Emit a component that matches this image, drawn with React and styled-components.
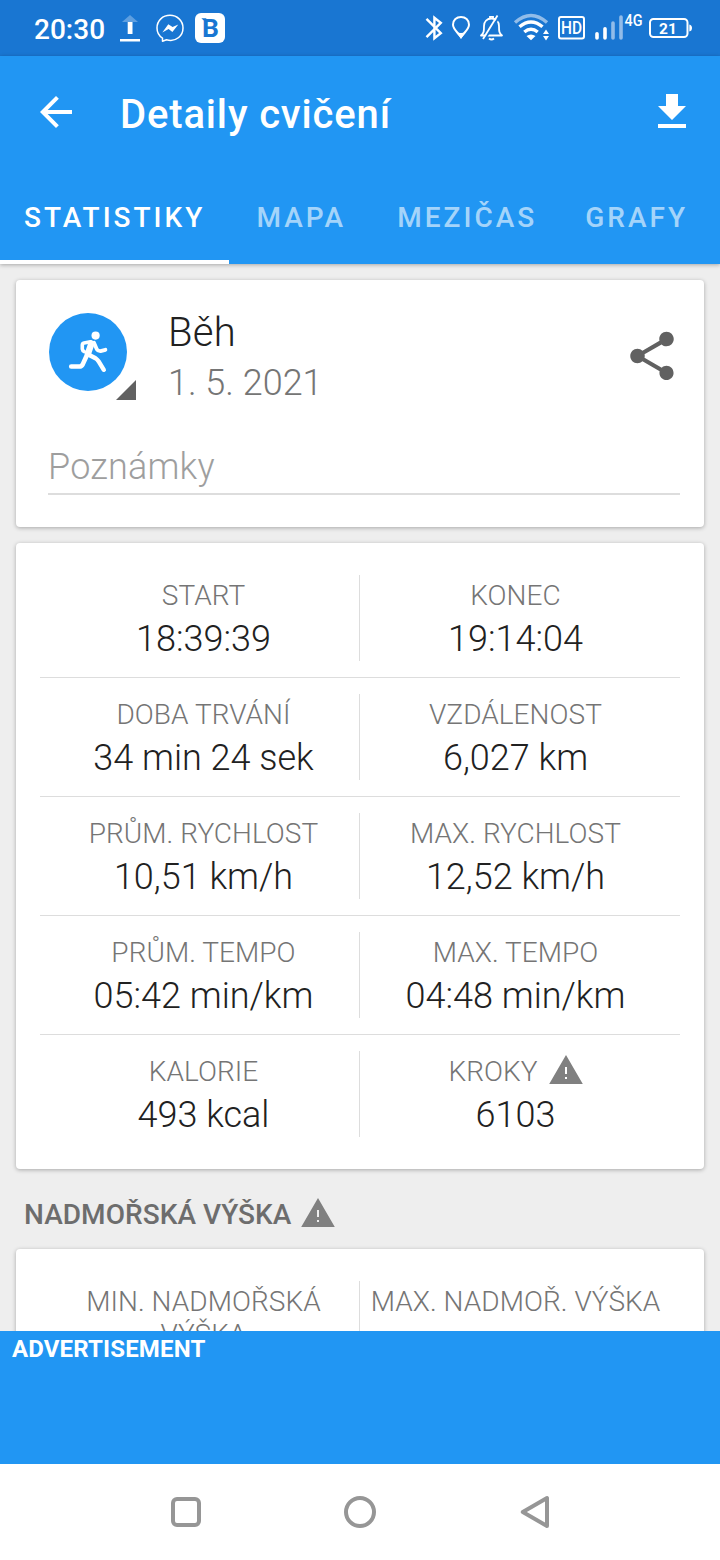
import React from 'react'
import styled, { createGlobalStyle } from 'styled-components'

const GlobalStyle = createGlobalStyle`
    * {
        box-sizing: border-box;
    }
    body {
        margin: 0;
        background-color: #eeeeee;
        font-family: Roboto, "Noto Sans", sans-serif;
    }
    svg {
        display: block;
        flex-shrink: 0;
    }
`

const Screen = styled.div`
    width: 720px;
    height: 1560px;
    display: flex;
    flex-direction: column;
    overflow: hidden;
`

// status bar
const StatusBar = styled.div`
    height: 56px;
    flex-shrink: 0;
    padding: 0 28px 0 34px;
    background-color: #1976d2;
    color: white;
    display: flex;
    justify-content: space-between;
`
const StatusGroup = styled.div`
    display: flex;
    align-items: center;
`
const Clock = styled.span`
    width: 82px;
    font-size: 28px;
    font-weight: 500;
    line-height: 32px;
    padding-top: 3px;
`

// app bar
const Header = styled.header`
    height: 208px;
    flex-shrink: 0;
    background-color: #2196f3;
    color: white;
    position: relative;
    box-shadow: 0 1px 4px rgba(0, 0, 0, 0.3);
`
const Toolbar = styled.div`
    height: 112px;
    padding: 0 24px 0 32px;
    display: flex;
    align-items: center;
`
const Title = styled.h1`
    flex: 1;
    margin: 0;
    padding: 5px 0 0 40px;
    font-size: 40px;
    font-weight: 500;
    letter-spacing: 0.85px;
`
const Tabs = styled.nav`
    height: 96px;
    display: flex;
`
const Tab = styled.a`
    min-width: 144px;
    padding: 2px 24px 0;
    display: flex;
    align-items: center;
    justify-content: center;
    font-size: 28px;
    font-weight: 500;
    letter-spacing: 3px;
    border-top: 4px solid transparent;
    border-bottom: 4px solid ${props => props.$active ? 'white' : 'transparent'};
    color: ${props => props.$active ? 'white' : 'rgba(255, 255, 255, 0.6)'};
`

const Content = styled.main`
    flex: 1;
    min-height: 0;
    overflow: hidden;
    padding: 16px 16px 0;
`
const Card = styled.section`
    background-color: white;
    border-radius: 4px;
    box-shadow: 0 1px 4px rgba(0, 0, 0, 0.3);
    margin-bottom: 16px;
`

// activity
const ActivityCard = styled(Card)`
    height: 247px;
    padding: 32px 24px 32px 32px;
    display: flex;
    flex-direction: column;
    justify-content: space-between;
`
const Activity = styled.div`
    display: flex;
    height: 88px;
`
const Avatar = styled.div`
    width: 88px;
    height: 88px;
    position: relative;
`
const Corner = styled.div`
    position: absolute;
    right: 0;
    bottom: 0;
    width: 20px;
    height: 20px;
    background-color: #616161;
    clip-path: polygon(100% 0, 100% 100%, 0 100%);
`
const ActivityInfo = styled.div`
    flex: 1;
    padding-left: 32px;
`
const ActivityName = styled.div`
    margin-top: -3px;
    font-size: 40px;
    line-height: 47px;
    font-weight: 300;
    letter-spacing: 0.3px;
    color: #212121;
`
const ActivityDate = styled.div`
    margin-top: 6px;
    font-size: 36px;
    line-height: 42px;
    font-weight: 300;
    color: #757575;
`
const ShareButton = styled.div`
    height: 88px;
    padding-top: 15px;
    margin-right: -1px;
`
const Notes = styled.div`
    height: 52px;
    border-bottom: 2px solid #dddddd;
    font-size: 36px;
    line-height: 48px;
    font-weight: 300;
    letter-spacing: 0.2px;
    color: #9e9e9e;
`

// stats
const StatsCard = styled(Card)`
    padding: 16px 24px;
`
const StatRow = styled.div`
    display: flex;
    padding: 16px 8px;
    & + & {
        border-top: 1px solid #dddddd;
    }
`
const Stat = styled.div`
    width: 312px;
    min-height: 86px;
    padding-top: 4px;
    display: flex;
    flex-direction: column;
    align-items: center;
    text-align: center;
    border-right: 1px solid ${props => props.$first ? '#dddddd' : 'transparent'};
`
const StatLabel = styled.div`
    display: flex;
    align-items: center;
    gap: 11px;
    font-size: 28px;
    line-height: 33px;
    font-weight: 300;
    letter-spacing: 0.05px;
    color: #757575;
    svg {
        margin: -4px 0 0;
    }
`
const StatValue = styled.div`
    padding-top: 5px;
    font-size: 36px;
    line-height: 44px;
    font-weight: 300;
    color: #212121;
`
const SectionTitle = styled.h2`
    height: 80px;
    margin: -16px 0 0;
    padding: 7px 8px 0;
    display: flex;
    align-items: center;
    gap: 10px;
    font-size: 28px;
    font-weight: 500;
    letter-spacing: 0.05px;
    color: #6d6d6d;
`
const SectionText = styled.span`
    padding-top: 3px;
`

const Advertisement = styled.div`
    height: 133px;
    flex-shrink: 0;
    padding: 4px 12px;
    background-color: #2196f3;
    color: white;
    font-size: 24px;
    line-height: 28px;
    font-weight: 700;
    letter-spacing: 0.15px;
`
const NavBar = styled.div`
    height: 96px;
    flex-shrink: 0;
    background-color: white;
    display: flex;
    align-items: center;
    justify-content: center;
    gap: 138px;
`

const WarningIcon = () => (
    <svg width="34" height="29" viewBox="0 0 34 29">
        <path fill="#808080" fillRule="evenodd" d="M17 0L33.8 29H0.2zM16 12v7h2v-7zM16 22v2h2v-2z" />
    </svg>
)

const RunnerIcon = () => (
    <svg width="88" height="88" viewBox="48 312 88 88">
        <circle cx="88" cy="352" r="39" fill="#2196f3" />
        <circle cx="95.6" cy="335.6" r="4.1" fill="white" />
        <g fill="none" stroke="white" strokeLinecap="round" strokeLinejoin="round">
            <path strokeWidth="3.6" d="M90.5 341.8L84 343Q82.3 343.4 82.3 345V349Q82.5 350.8 84.3 351.6" />
            <path strokeWidth="3.8" d="M94 342.8L96.8 349.2Q98 351.2 100.5 351.1L105.4 349.8" />
            <path strokeWidth="6.4" d="M91.4 343.6L88 353.5" />
            <path strokeWidth="4.6" d="M87.2 354.5L82.6 364.6Q81.6 366.5 79.5 366.5H71.2" />
            <path strokeWidth="4.4" d="M88.2 354.5L95.5 358.3Q97.4 359.6 98.5 361.2L103.8 369.8" />
        </g>
    </svg>
)

const stats = [
    [{ label: 'START', value: '18:39:39' }, { label: 'KONEC', value: '19:14:04' }],
    [{ label: 'DOBA TRVÁNÍ', value: '34 min 24 sek' }, { label: 'VZDÁLENOST', value: '6,027 km' }],
    [{ label: 'PRŮM. RYCHLOST', value: '10,51 km/h' }, { label: 'MAX. RYCHLOST', value: '12,52 km/h' }],
    [{ label: 'PRŮM. TEMPO', value: '05:42 min/km' }, { label: 'MAX. TEMPO', value: '04:48 min/km' }],
    [{ label: 'KALORIE', value: '493 kcal' }, { label: 'KROKY', value: '6103', warning: true }],
]
const altitude = [
    [{ label: 'MIN. NADMOŘSKÁ VÝŠKA' }, { label: 'MAX. NADMOŘ. VÝŠKA' }],
]
const tabs = ['STATISTIKY', 'MAPA', 'MEZIČAS', 'GRAFY']

function Stats({ rows }) {
    return (
        <StatsCard>
            {rows.map((row, i) => (
                <StatRow key={i}>
                    {row.map((item, j) => (
                        <Stat key={item.label} $first={j === 0}>
                            <StatLabel>{item.label}{item.warning && <WarningIcon />}</StatLabel>
                            {item.value && <StatValue>{item.value}</StatValue>}
                        </Stat>
                    ))}
                </StatRow>
            ))}
        </StatsCard>
    )
}

function PhoneStatus() {
    return (
        <StatusBar>
            <StatusGroup>
                <Clock>20:30</Clock>
                <svg width="110" height="56" viewBox="116 0 110 56">
                    <path d="M130 15l8 7h-16z" fill="#5e9fe0" />
                    <path d="M127.7 22h4.8v12h-4.8zM120 39h20v2.5h-20z" fill="white" />
                    <path d="M162.5 38.2V41.2L166.5 39.8C177 42.5 183 35 183 28C183 20.5 177 15.3 170 15.3C162.8 15.3 157 20.5 157 28C157 32.5 159.2 36 162.5 38.2Z" fill="none" stroke="white" strokeWidth="1.5" strokeLinejoin="round" />
                    <path d="M162.3 32.5L168.3 24.2L172.6 27L178.3 24.4L172.4 32L168.6 29Z" fill="white" />
                    <rect x="195" y="13" width="30" height="30" rx="6" fill="white" />
                    <path d="M201.3 18.2h5v2.4h-2.5z" fill="#1976d2" />
                    <text x="202" y="37.3" fontFamily="Roboto" fontSize="26.5" fontWeight="700" fill="#1976d2">B</text>
                </svg>
            </StatusGroup>
            <svg width="270" height="56" viewBox="422 0 270 56" fill="none" stroke="white">
                {/* bluetooth */}
                <path strokeWidth="2.4" d="M426.5 18.8L440.8 33.2L434.4 38.2V17.8L440.8 22.8L426.5 37.2" />
                {/* location */}
                <path strokeWidth="2" d="M461 37C458.5 33 453 29.5 453 24.8C453 20 456.6 17 461 17C465.4 17 469 20 469 24.8C469 29.5 463.5 33 461 37Z" />
                <path stroke="none" fill="white" d="M455.8 32Q461 34 466.2 32L461 38.8z" />
                {/* muted bell */}
                <path strokeWidth="1.8" strokeLinejoin="round" d="M481 35.5C484 33 484 31 484 26C484 21.5 487 18.5 491.5 18.5C496 18.5 499 21.5 499 26C499 31 499 33 502 35.5Z" />
                <path strokeWidth="1.8" d="M490 18.5V16.8h3v1.7M489 38.5Q491.5 40.5 494 38.5" />
                <path stroke="#1976d2" strokeWidth="2" d="M485 39L499 17" />
                <path strokeWidth="1.8" d="M483 39L497.5 15.5" />
                {/* wifi */}
                <path stroke="#91bce9" strokeWidth="3.4" d="M515 22.5Q531 8.5 547 22.5" />
                <path strokeWidth="3.4" d="M519.5 26.8Q531 17 542.5 26.8M524.3 32Q531 26.4 537.7 32" />
                <path stroke="none" fill="white" d="M526.5 36Q531 33 535.5 36L531 40.3zM546 29.5l3 4.5h-6zM546 40.5l3-4.5h-6z" />
                {/* hd */}
                <rect x="559" y="17" width="25" height="21.5" rx="2" strokeWidth="2" />
                <text x="561" y="34" fontFamily="Roboto" fontSize="17.5" fontWeight="500" fill="white" stroke="none" textLength="21" lengthAdjust="spacingAndGlyphs">HD</text>
                {/* signal */}
                <path strokeWidth="3.6" strokeLinecap="round" d="M597 33.8V38M605 28.8V38" />
                <path stroke="#91bce9" strokeWidth="3.6" strokeLinecap="round" d="M613 23V38M621 17V38" />
                <text x="624.5" y="26" fontFamily="Roboto" fontSize="17" fontWeight="500" fill="white" stroke="none" textLength="18" lengthAdjust="spacingAndGlyphs">4G</text>
                {/* battery */}
                <rect x="650" y="19" width="37.5" height="18" rx="3.5" strokeWidth="2" />
                <path stroke="none" fill="white" d="M689.3 24.5Q692 25 692 28Q692 31 689.3 31.5z" />
                <text x="659" y="33.8" fontFamily="Roboto" fontSize="15.5" fontWeight="700" fill="white" stroke="none">21</text>
            </svg>
        </StatusBar>
    )
}

function App() {
    return (
        <Screen>
            <GlobalStyle />
            <PhoneStatus />
            <Header>
                <Toolbar>
                    <svg width="48" height="48" viewBox="0 0 24 24" fill="white">
                        <path d="M20 11H7.83l5.59-5.59L12 4l-8 8 8 8 1.41-1.41L7.83 13H20v-2z" />
                    </svg>
                    <Title>Detaily cvičení</Title>
                    <svg width="48" height="48" viewBox="0 0 24 24" fill="white">
                        <path d="M19 9h-4V3H9v6H5l7 7 7-7zM5 18v2h14v-2H5z" />
                    </svg>
                </Toolbar>
                <Tabs>
                    {tabs.map((tab, i) => <Tab key={tab} $active={i === 0}>{tab}</Tab>)}
                </Tabs>
            </Header>
            <Content>
                <ActivityCard>
                    <Activity>
                        <Avatar>
                            <RunnerIcon />
                            <Corner />
                        </Avatar>
                        <ActivityInfo>
                            <ActivityName>Běh</ActivityName>
                            <ActivityDate>1. 5. 2021</ActivityDate>
                        </ActivityInfo>
                        <ShareButton>
                            <svg width="58" height="58" viewBox="0 0 24 24" fill="#616161">
                                <path d="M18 16.08c-.76 0-1.44.3-1.96.77L8.91 12.7c.05-.23.09-.46.09-.7s-.04-.47-.09-.7l7.05-4.11c.54.5 1.25.81 2.04.81 1.66 0 3-1.34 3-3s-1.34-3-3-3-3 1.34-3 3c0 .24.04.47.09.7L8.04 9.81C7.5 9.31 6.79 9 6 9c-1.66 0-3 1.34-3 3s1.34 3 3 3c.79 0 1.5-.31 2.04-.81l7.12 4.16c-.05.21-.08.43-.08.65 0 1.61 1.31 2.92 2.92 2.92s2.92-1.31 2.92-2.92-1.31-2.92-2.92-2.92z" />
                            </svg>
                        </ShareButton>
                    </Activity>
                    <Notes>Poznámky</Notes>
                </ActivityCard>
                <Stats rows={stats} />
                <SectionTitle><SectionText>NADMOŘSKÁ VÝŠKA</SectionText><WarningIcon /></SectionTitle>
                <Stats rows={altitude} />
            </Content>
            <Advertisement>ADVERTISEMENT</Advertisement>
            <NavBar>
                <svg width="36" height="36" viewBox="0 0 36 36" fill="none" stroke="#969696" strokeWidth="4">
                    <rect x="5" y="5" width="26" height="26" rx="4" />
                </svg>
                <svg width="36" height="36" viewBox="0 0 36 36" fill="none" stroke="#969696" strokeWidth="4">
                    <circle cx="18" cy="18" r="14" />
                </svg>
                <svg width="36" height="36" viewBox="0 0 36 36" fill="none" stroke="#969696" strokeWidth="4" strokeLinejoin="round">
                    <path d="M31 4v28L6.8 18z" />
                </svg>
            </NavBar>
        </Screen>
    )
}

export default App
